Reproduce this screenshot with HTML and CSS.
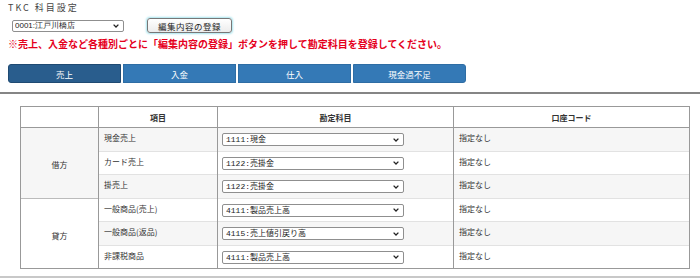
FILE: index.html
```html
<!DOCTYPE html>
<html lang="ja">
<head>
    <meta charset="UTF-8">
    <meta name="viewport" content="width=device-width, initial-scale=1.0">
    <title>TKC 科目設定</title>
    <link rel="stylesheet" href="styles.css">
</head>
<body>
    <h1 class="title">TKC 科目設定</h1>

    <!-- 店舗選択と登録ボタン -->
    <div class="toolbar">
        <select class="shop-select">
            <option>0001:江戸川橋店</option>
        </select>
        <button type="button" class="save-btn">編集内容の登録</button>
    </div>

    <p class="notice">※売上、入金など各種別ごとに「編集内容の登録」ボタンを押して勘定科目を登録してください。</p>

    <!-- 種別タブ -->
    <div class="tabs">
        <button type="button" class="tab active">売上</button>
        <button type="button" class="tab">入金</button>
        <button type="button" class="tab">仕入</button>
        <button type="button" class="tab">現金過不足</button>
    </div>

    <hr class="divider">

    <table class="grid">
        <colgroup>
            <col class="col-side">
            <col class="col-item">
            <col class="col-account">
            <col class="col-code">
        </colgroup>
        <thead>
            <tr>
                <th></th>
                <th>項目</th>
                <th>勘定科目</th>
                <th>口座コード</th>
            </tr>
        </thead>
        <tbody>
            <tr>
                <td class="side" rowspan="3">借方</td>
                <td>現金売上</td>
                <td><select class="account"><option>1111:現金</option></select></td>
                <td>指定なし</td>
            </tr>
            <tr>
                <td>カード売上</td>
                <td><select class="account"><option>1122:売掛金</option></select></td>
                <td>指定なし</td>
            </tr>
            <tr>
                <td>掛売上</td>
                <td><select class="account"><option>1122:売掛金</option></select></td>
                <td>指定なし</td>
            </tr>
            <tr>
                <td class="side" rowspan="3">貸方</td>
                <td>一般商品(売上)</td>
                <td><select class="account"><option>4111:製品売上高</option></select></td>
                <td>指定なし</td>
            </tr>
            <tr>
                <td>一般商品(返品)</td>
                <td><select class="account"><option>4115:売上値引戻り高</option></select></td>
                <td>指定なし</td>
            </tr>
            <tr>
                <td>非課税商品</td>
                <td><select class="account"><option>4111:製品売上高</option></select></td>
                <td>指定なし</td>
            </tr>
        </tbody>
    </table>

    <div class="bottom-bar"></div>
</body>
</html>
```

FILE: styles.css
```css
body {
    margin: 0;
    font-family: "Noto Sans CJK JP", "Noto Sans", sans-serif;
    color: #333;
    background-color: #fff;
}

.title {
    margin: 0;
    padding: 2px 0 0 8px;
    font-size: 9px;
    line-height: 12px;
    font-weight: normal;
    letter-spacing: 2px;
    color: #444;
}

/* 店舗選択 + 登録ボタン */
.toolbar {
    display: flex;
    align-items: center;
    gap: 23px;
    height: 15px;
    margin-top: 4px;
    padding-left: 12px;
}

select {
    -webkit-appearance: none;
    appearance: none;
    margin: 0;
    padding: 0 12px 0 2px;
    border: 1px solid #8f8f8f;
    border-radius: 2px;
    background-color: #fff;
    background-image: url("data:image/svg+xml,%3Csvg xmlns='http://www.w3.org/2000/svg' width='6' height='4' viewBox='0 0 6 4'%3E%3Cpath d='M0.6 0.6 L3 3 L5.4 0.6' fill='none' stroke='%23222' stroke-width='1.3'/%3E%3C/svg%3E");
    background-repeat: no-repeat;
    background-position: right 4px center;
    color: #222;
}

.shop-select {
    width: 112px;
    height: 12px;
    font-size: 8px;
    line-height: 10px;
}

.save-btn {
    width: 85px;
    height: 15px;
    padding: 0;
    font-family: inherit;
    font-size: 8.5px;
    letter-spacing: 0.5px;
    color: #222;
    border: 1px solid #777;
    border-radius: 3px;
    background: linear-gradient(#fff, #ececec);
    box-shadow: 0 0 2px 1px #a8e4ee;
}

.notice {
    margin: 4px 0 0;
    padding-left: 8px;
    font-size: 10px;
    line-height: 14px;
    font-weight: bold;
    color: #e5001c;
}

/* 種別タブ */
.tabs {
    display: flex;
    gap: 2px;
    margin-top: 13px;
    padding-left: 8px;
}

.tab {
    width: 113px;
    height: 19px;
    padding: 0;
    font-family: inherit;
    font-size: 8.5px;
    color: #fff;
    border: 1px solid #2e6da4;
    background-color: #3479b6;
    border-radius: 0;
}

.tab:first-child {
    border-radius: 3px 0 0 3px;
}

.tab:last-child {
    border-radius: 0 3px 3px 0;
}

.tab.active {
    background-color: #295d8d;
    border-color: #1f4a72;
}

.divider {
    margin: 9px 0 0;
    border: 0;
    border-top: 2px solid #858585;
    height: 0;
}

/* 科目テーブル */
.grid {
    width: 669px;
    margin: 12px 0 0 20px;
    border-collapse: collapse;
    table-layout: fixed;
    font-size: 8px;
    line-height: 11px;
    border: 1px solid #999;
}

.col-side { width: 78px; }
.col-item { width: 119px; }
.col-account { width: 236px; }
.col-code { width: 236px; }

.grid th {
    height: 20px;
    padding: 0;
    font-weight: bold;
    text-align: center;
    vertical-align: middle;
    border: 1px solid #999;
    background-color: #fff;
}

.grid td {
    height: 18.5px;
    padding: 4px 5px 0;
    vertical-align: top;
    border-top: 1px solid #e2e2e2;
    border-left: 1px solid #999;
    border-right: 1px solid #999;
}

.grid tbody tr:nth-child(odd) td {
    background-color: #f6f6f6;
}

.grid td.side {
    text-align: center;
    vertical-align: middle;
    border-top: 1px solid #bbb;
}

.account {
    display: block;
    width: 182px;
    height: 13px;
    margin: 1px 0 0 -1px;
    padding-left: 3px;
    font-family: "Liberation Mono", "Noto Sans CJK JP", monospace;
    font-size: 8px;
    line-height: 11px;
}

.bottom-bar {
    margin-top: 7px;
    height: 4px;
    background-color: #c8c8c8;
}
```
